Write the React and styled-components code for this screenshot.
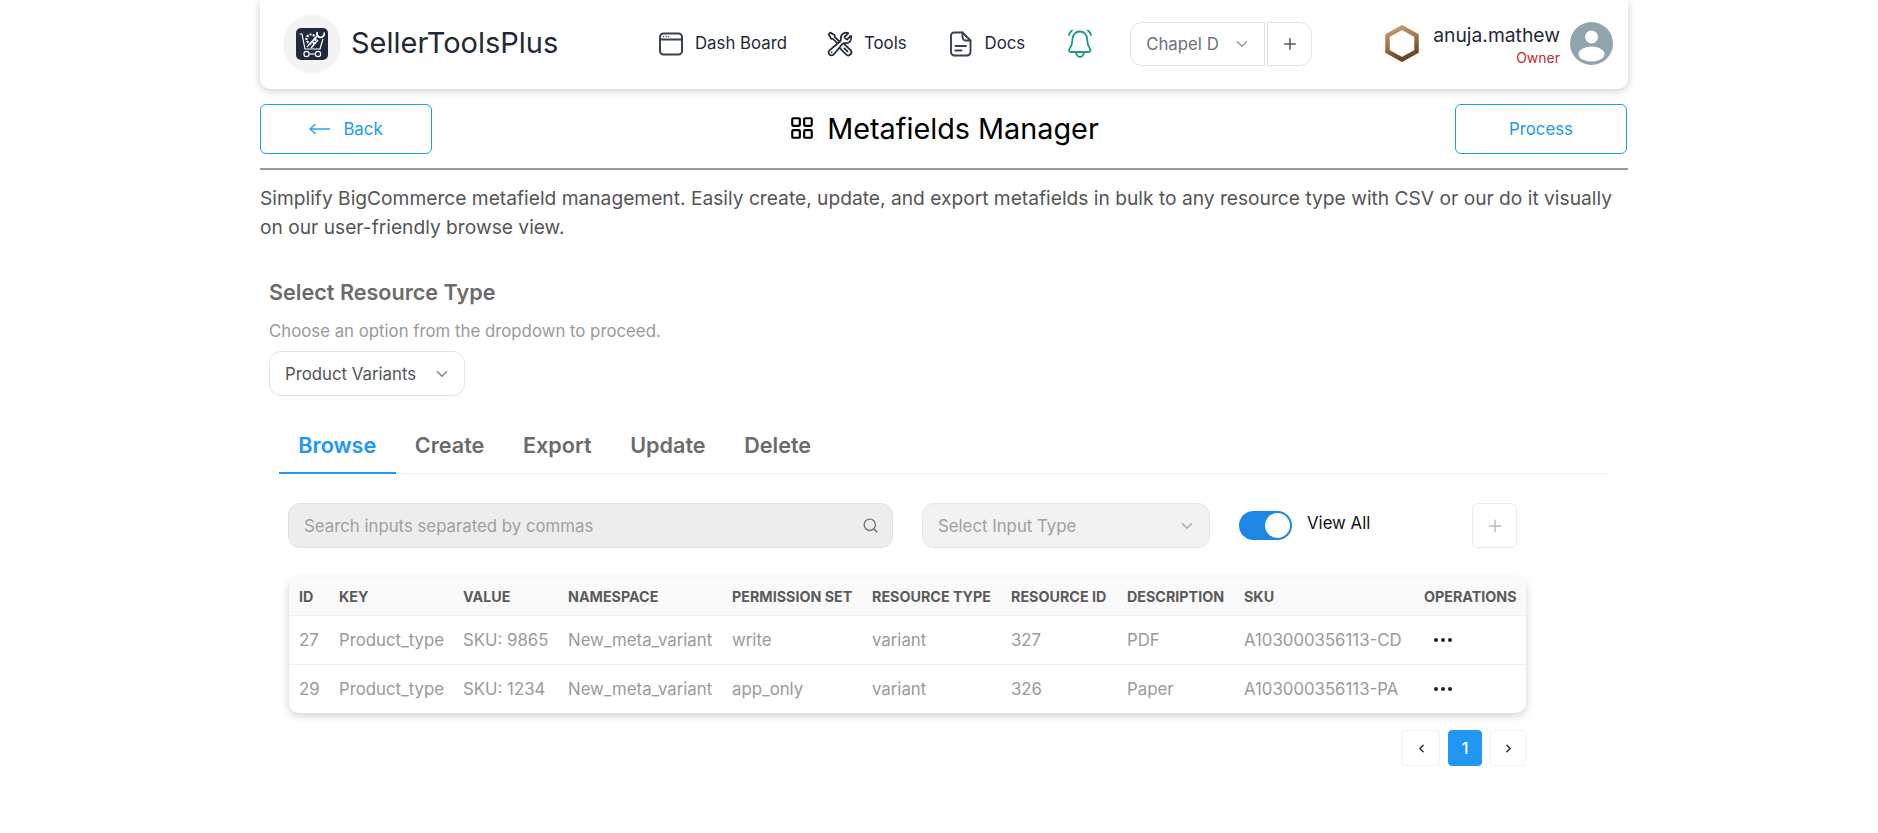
import React from "react";
import styled, { createGlobalStyle } from "styled-components";
import { HiOutlineWrenchScrewdriver } from "react-icons/hi2";
import { LuLayoutGrid, LuSearch, LuChevronDown, LuPlus, LuChevronLeft, LuChevronRight } from "react-icons/lu";

const Global = createGlobalStyle`
  html, body { margin: 0; padding: 0; background: #fff; }
  body { font-family: Inter, "Liberation Sans", sans-serif; color: #1f2937; }
  * { box-sizing: border-box; }
`;
const Page = styled.div`width: 1368px; margin-left: 260px;`;
const Header = styled.header`
  height: 89px; display: flex; align-items: center; background: #fff; border-radius: 0 0 10px 10px;
  box-shadow: 0 2px 8px rgba(0,0,0,.2);
  padding: 0 15px 2px 23px;
`;
const Brand = styled.div`display: flex; align-items: center; gap: 10px; width: 376px; flex: none;`;
const LogoCircle = styled.div`width: 58px; height: 58px; border-radius: 50%; background: #f3f3f3; display: flex; align-items: center; justify-content: center;`;
const BrandName = styled.span`font-size: 29px; font-weight: 400; color: #1f2937; margin-bottom: 3px;`;
const Nav = styled.nav`display: flex; align-items: center; flex: none;`;
const NavItem = styled.a`
  display: flex; align-items: center; gap: ${p => p.$gap}px; font-size: 16.8px; font-weight: 400; color: #1f2937;
  margin-right: ${p => p.$mr}px;
`;
const NavLabel = styled.span`margin-bottom: 1px;`;
const BellWrap = styled.div`width: 24px; height: 30px; margin-right: 38px; display: flex;`;
const StoreSelect = styled.div`
  width: 135px; height: 44px; border: 1px solid #e2e2e2; border-radius: 12px 0 0 12px;
  display: flex; align-items: center; justify-content: space-between; padding: 0 13px 0 15px;
  font-size: 16.8px; color: #6b7280;
`;
const AddStore = styled.div`
  width: 45px; height: 44px; margin-left: 2px; border: 1px solid #e2e2e2; border-radius: 0 12px 12px 0;
  display: flex; align-items: center; justify-content: center; color: #4b5563;
`;
const User = styled.div`margin-left: auto; display: flex; align-items: center;`;
const UserText = styled.div`display: flex; flex-direction: column; align-items: flex-end; margin: 0 10px 0 14px; padding-top: 8px;`;
const UserName = styled.span`font-size: 19.3px; line-height: 24px; color: #1f2937; margin-top: -4px;`;
const Role = styled.span`font-size: 14px; line-height: 20px; color: #c9252d; margin-top: 1px;`;
const TitleBar = styled.div`
  height: 66px; margin-top: 15px; display: flex; align-items: flex-start; justify-content: space-between;
  border-bottom: 2px solid #9a9a9a;
`;
const OutlineBtn = styled.button`
  width: ${p => p.$w}px; height: 50px; border: 1px solid #1a9fe8; border-radius: 6px; background: #fff;
  display: flex; align-items: center; justify-content: center; gap: 13px;
  color: #1a9be8; font: 400 16.8px Inter, sans-serif; margin-right: ${p => p.$mr || 0}px;
`;
const Title = styled.h1`
  margin: 0 0 0 1px; height: 48px; display: flex; align-items: center; gap: 12px; font-size: 28.8px; font-weight: 400; color: #000;
`;
const Intro = styled.p`margin: 14px 0 0; font-size: 19.2px; line-height: 29px; color: #555; width: 1368px;`;
const Body = styled.div`padding: 0 20px 0 9px;`;
const SectionTitle = styled.h2`margin: 36px 0 0; font-size: 21.6px; line-height: 28px; font-weight: 600; color: #6b6b6b;`;
const Hint = styled.p`margin: 13px 0 0; font-size: 16.8px; line-height: 24px; color: #9a9a9a;`;
const TypeSelect = styled.div`
  width: 196px; height: 45px; margin-top: 8px; border: 1px solid #e2e2e2; border-radius: 12px;
  display: flex; align-items: center; justify-content: space-between; padding: 0 13px 0 15px;
  font-size: 16.8px; color: #555;
`;
const Tabs = styled.div`margin: 29px 0 0 10px; display: flex; border-bottom: 1px solid #eee; height: 49px;`;
const Tab = styled.div`
  padding: 0 19.3px; height: 49px; line-height: 41px; font-size: 21.6px; font-weight: 600;
  color: ${p => p.$active ? "#2196f3" : "#6b6b6b"};
  border-bottom: 2px solid ${p => p.$active ? "#2196f3" : "transparent"};
`;
const Filters = styled.div`margin: 29px 0 0 19px; display: flex; align-items: center; height: 45px;`;
const Search = styled.div`
  width: 605px; height: 45px; background: #ededed; border: 1px solid #e0e0e0; border-radius: 12px;
  display: flex; align-items: center; justify-content: space-between; padding: 0 13px 0 15px; font-size: 16.8px; color: #a0a0a0;
`;
const InputType = styled(Search)`width: 288px; margin-left: 29px; background: #f2f2f2; border-color: #e6e6e6;`;
const Toggle = styled.div`
  width: 53px; height: 29px; margin-left: 29px; border-radius: 15px; background: #1e86e5; position: relative;
  &::after { content: ""; position: absolute; right: 2px; top: 2px; width: 25px; height: 25px; border-radius: 50%; background: #fff; }
`;
const ToggleLabel = styled.span`font-size: 16.8px; font-weight: 400; color: #111; margin: -6px 0 0 15px; width: 165px;`;
const PlusBox = styled.div`
  width: 45px; height: 45px; border: 1px solid #ececec; border-radius: 6px; color: #b0b0b0;
  display: flex; align-items: center; justify-content: center;
  box-shadow: 0 1px 2px rgba(0,0,0,.04);
`;
const TableCard = styled.div`
  margin: 29px 0 0 20px; width: 1237px; border-radius: 10px; overflow: hidden;
  box-shadow: 0 3px 9px rgba(0,0,0,.18);
`;
const Table = styled.table`width: 1237px; border-collapse: collapse; table-layout: fixed;`;
const Th = styled.th`
  width: ${p => p.$w}px; height: 38px; padding: 1px 0 0 10px; text-align: left; white-space: nowrap;
  font-size: 14.3px; font-weight: 700; color: #5a5a5a; background: #fafafa; border-bottom: 1px solid #eee;
`;
const Td = styled.td`
  height: 49px; padding: 0 0 0 10px; font-size: 16.8px; color: #9a9a9a; border-bottom: 1px solid #eee; white-space: nowrap;
  tr:last-child & { border-bottom: 0; }
`;
const Dots = styled.span`display: flex; gap: 3px; margin-left: 10px;`;
const Dot = styled.i`width: 4px; height: 4px; border-radius: 50%; background: #222;`;
const Pager = styled.div`margin: 17px 0 0 1133px; width: 124px; display: flex; justify-content: space-between; height: 36px;`;
const PageBtn = styled.div`
  width: ${p => p.$w}px; border-radius: 4px; display: flex; align-items: center; justify-content: center;
  font-size: 16px; font-weight: 500;
  color: ${p => p.$active ? "#fff" : "#222"};
  background: ${p => p.$active ? "#2196f3" : "#fff"};
  border: 1px solid ${p => p.$active ? "#2196f3" : "#f2f2f2"};
`;

const Logo = () => (
  <svg width="32" height="32" viewBox="0 0 32 32">
    <rect width="32" height="32" rx="5" fill="#1f2a3c" />
    <g fill="none" stroke="#fff" strokeWidth="1.2">
      <path d="M3.500 6h2.500l3 15h15l3-10" />
      <circle cx="10.500" cy="26" r="2.600" />
      <circle cx="22" cy="26" r="2.600" />
      <path d="M13.500 26h5.500" />
      <circle cx="15" cy="11" r="4.500" strokeDasharray="2 1.200" strokeWidth="2.200" />
      <path d="M11 19l10-11M15 20l7-8" strokeWidth="1.400" />
      <path d="M21.500 4a3.500 3.500 0 0 0 4.500 5 3.500 3.500 0 0 0 2-4.500" strokeWidth="1.800" />
    </g>
  </svg>
);
const BrowserIcon = () => (
  <svg width="24" height="24" viewBox="0 0 24 24" fill="none" stroke="#374151" strokeWidth="2">
    <rect x="1" y="1.500" width="22" height="21" rx="3.500" />
    <path d="M1 7.500h22" />
    <path d="M4 4.600h1.200M6.600 4.600h1.200M9.200 4.600h1.200" strokeWidth="1.200" />
  </svg>
);
const DocIcon = () => (
  <svg width="24" height="26" viewBox="0 0 24 26" fill="none" stroke="#374151" strokeWidth="1.900" strokeLinejoin="round" strokeLinecap="round">
    <path d="M5 1.500h8.500l8 8V21a3.500 3.500 0 0 1-3.500 3.500H5.500A3.500 3.500 0 0 1 2 21V4.500a3 3 0 0 1 3-3z" />
    <path d="M13.500 1.500V6a3.500 3.500 0 0 0 3.500 3.500h4.500" />
    <path d="M6.500 15h10.500M6.500 19.500h6" />
  </svg>
);
const BellIcon = () => (
  <svg width="24" height="30" viewBox="0 0 24 30" fill="none" stroke="#1a9a85" strokeWidth="1.800" strokeLinecap="round" strokeLinejoin="round">
    <path d="M4.500 10a7.300 7.500 0 0 1 14.600 0c0 5 1 7 3 10 1 1.500.3 3-1.500 3H3c-1.800 0-2.500-1.500-1.500-3 2-3 3-5 3-10z" />
    <path d="M8 24c1 3 2 4 4 4s3-1 4-4" />
    <path d="M1 6c.5-2 1.500-3.500 3-4.500M23 6c-.5-2-1.500-3.500-3-4.500" />
  </svg>
);
const BackArrow = () => (
  <svg width="21" height="12" viewBox="0 0 21 12" fill="none" stroke="#29a6ee" strokeWidth="1.400">
    <path d="M1 6h20M6.500 1L1 6l5.500 5" />
  </svg>
);
const Hex = () => (
  <svg width="34" height="37" viewBox="0 0 34 37">
    <defs>
      <linearGradient id="hx" x1="0" y1="0" x2="0.3" y2="1">
        <stop offset="0" stopColor="#c9a27a" />
        <stop offset=".5" stopColor="#a4754a" />
        <stop offset="1" stopColor="#6b4524" />
      </linearGradient>
    </defs>
    <path d="M17 2.500L31.500 10.500V26.500L17 34.500L2.500 26.500V10.500Z" fill="none" stroke="url(#hx)" strokeWidth="4.500" />
  </svg>
);
const Avatar = () => (
  <svg width="43" height="43" viewBox="0 0 43 43">
    <circle cx="21.500" cy="21.500" r="21.500" fill="#90a4ae" />
    <circle cx="21.500" cy="15" r="6.500" fill="#fff" />
    <ellipse cx="21.500" cy="32" rx="13" ry="7.500" fill="#fff" />
  </svg>
);

const cols = [
  ["ID", 40], ["KEY", 124], ["VALUE", 105], ["NAMESPACE", 164], ["PERMISSION SET", 140],
  ["RESOURCE TYPE", 139], ["RESOURCE ID", 116], ["DESCRIPTION", 117], ["SKU", 180], ["OPERATIONS", 112],
];
const rows = [
  ["27", "Product_type", "SKU: 9865", "New_meta_variant", "write", "variant", "327", "PDF", "A103000356113-CD"],
  ["29", "Product_type", "SKU: 1234", "New_meta_variant", "app_only", "variant", "326", "Paper", "A103000356113-PA"],
];

export default function App() {
  return (
    <Page>
      <Global />
      <Header>
        <Brand>
          <LogoCircle><Logo /></LogoCircle>
          <BrandName>SellerToolsPlus</BrandName>
        </Brand>
        <Nav>
          <NavItem $gap={12} $mr={39}><BrowserIcon /><NavLabel>Dash Board</NavLabel></NavItem>
          <NavItem $gap={10} $mr={42}><HiOutlineWrenchScrewdriver size={28} color="#1f2937" /><NavLabel>Tools</NavLabel></NavItem>
          <NavItem $gap={12} $mr={43}><DocIcon /><NavLabel>Docs</NavLabel></NavItem>
          <BellWrap><BellIcon /></BellWrap>
          <StoreSelect>Chapel D<LuChevronDown size={18} color="#999" /></StoreSelect>
          <AddStore><LuPlus size={18} /></AddStore>
        </Nav>
        <User>
          <Hex />
          <UserText>
            <UserName>anuja.mathew</UserName>
            <Role>Owner</Role>
          </UserText>
          <Avatar />
        </User>
      </Header>
      <TitleBar>
        <OutlineBtn $w={172}><BackArrow />Back</OutlineBtn>
        <Title><LuLayoutGrid size={26} color="#000" />Metafields Manager</Title>
        <OutlineBtn $w={172} $mr={1}>Process</OutlineBtn>
      </TitleBar>
      <Intro>Simplify BigCommerce metafield management. Easily create, update, and export metafields in bulk to any resource type with CSV or our do it visually on our user-friendly browse view.</Intro>
      <Body>
        <SectionTitle>Select Resource Type</SectionTitle>
        <Hint>Choose an option from the dropdown to proceed.</Hint>
        <TypeSelect>Product Variants<LuChevronDown size={18} color="#888" /></TypeSelect>
        <Tabs>
          <Tab $active>Browse</Tab><Tab>Create</Tab><Tab>Export</Tab><Tab>Update</Tab><Tab>Delete</Tab>
        </Tabs>
        <Filters>
          <Search>Search inputs separated by commas<LuSearch size={17} color="#777" /></Search>
          <InputType>Select Input Type<LuChevronDown size={18} color="#aaa" /></InputType>
          <Toggle />
          <ToggleLabel>View All</ToggleLabel>
          <PlusBox><LuPlus size={20} strokeWidth={1.5} /></PlusBox>
        </Filters>
        <TableCard>
          <Table>
            <thead><tr>{cols.map(([t, w]) => <Th key={t} $w={w}>{t}</Th>)}</tr></thead>
            <tbody>
              {rows.map(r => (
                <tr key={r[0]}>
                  {r.map((c, i) => <Td key={i}>{c}</Td>)}
                  <Td><Dots><Dot /><Dot /><Dot /></Dots></Td>
                </tr>
              ))}
            </tbody>
          </Table>
        </TableCard>
        <Pager>
          <PageBtn $w={38}><LuChevronLeft size={13} strokeWidth={2.5} /></PageBtn>
          <PageBtn $w={34} $active>1</PageBtn>
          <PageBtn $w={36}><LuChevronRight size={13} strokeWidth={2.5} /></PageBtn>
        </Pager>
      </Body>
    </Page>
  );
}
